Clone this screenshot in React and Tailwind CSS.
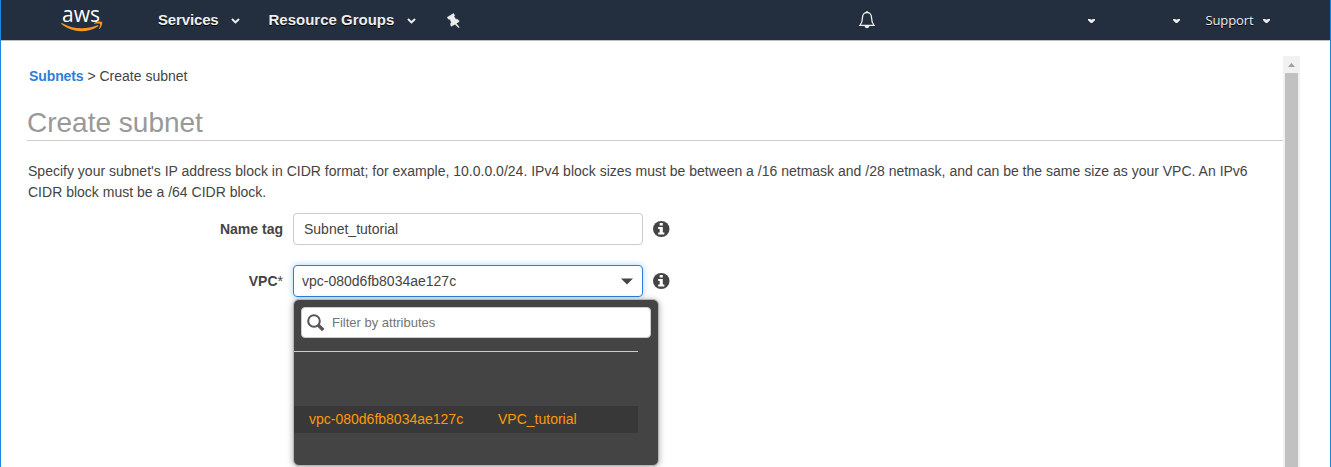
import React from "react";

function Chevron({ className = "" }) {
  return (
    <svg className={className} width="9" height="6" viewBox="0 0 9 6" fill="none" stroke="#eee" strokeWidth="2">
      <path d="M1 1l3.500 3.400L8 1" />
    </svg>
  );
}

function Caret({ className = "" }) {
  return (
    <svg className={className} width="7" height="4" viewBox="0 0 7 4" fill="#eee">
      <path d="M0 0H2L3.500.8 5 0H7V1.200L4.200 4H2.800L0 1.200z" />
    </svg>
  );
}

function AwsLogo() {
  return (
    <div className="relative h-[28px] w-[42px]">
      <span className="absolute left-[1px] top-[-4px] text-[21px] font-medium leading-[24px] text-white font-['Open_Sans',sans-serif]">aws</span>
      <svg className="absolute left-0 top-[15px]" width="42" height="12" viewBox="0 0 42 12">
        <path d="M.2 2.400C.4 1.900.8 1.900 1.300 2.200 13 8.800 25 8.600 36.500 4.300 37.500 4 38 4.700 37.200 5.300 26 12.800 10 11.500.5 3.100z" fill="#f7981f" />
        <path d="M33.300 2C35.500.3 40.200.2 41 1.100 41.700 2.200 40.500 6.500 38.500 8 38 8.300 37.900 8 38 7.600 38.700 6 39.500 3.800 39 3 38.400 2.200 35.500 2.500 33.800 2.700 33 2.800 32.900 2.400 33.300 2z" fill="#f7981f" />
      </svg>
    </div>
  );
}

function Info() {
  return (
    <svg className="mb-px ml-[10px]" width="16.500" height="16" viewBox="0 0 16 16" preserveAspectRatio="none">
      <circle cx="8" cy="8" r="8" fill="#444" />
      <path fill="#fff" d="M6.500 2h3v2.500h-3zM5 6h4.500v5.500H11v2H5v-2h1.500V8H5z" />
    </svg>
  );
}

function Header() {
  return (
    <header className="flex h-[41px] shrink-0 items-center border-b border-[#bfbfbf] bg-[#232f3e] text-[15px] font-bold text-[#eee]">
      <div className="ml-[60px] w-[97px]"><AwsLogo /></div>
      <span className="w-[73px] tracking-[-0.15px] [text-shadow:0_1px_0_#000]">Services</span>
      <Chevron className="mt-[2px]" />
      <span className="ml-[28.500px] w-[138px] [text-shadow:0_1px_0_#000]">Resource Groups</span>
      <Chevron className="mt-[2px]" />
      <svg className="ml-[31.500px]" width="13" height="15" viewBox="0 0 13 15" fill="#eee" stroke="#eee" strokeWidth="0.500">
        <path d="M.3 4.200L6.500.5 7.700 2.300 7 3.400 8.700 6.200C10.500 5.900 12 6.900 12.200 8.500L9.300 10.400 12.300 14.300 11.300 14.500 8 11.200 4.300 13.300C3.300 12 3.300 10.500 4.300 9.200L3 6.300 1.500 6.200z" />
      </svg>
      <svg className="ml-[399px]" width="16" height="18" viewBox="0 0 16 18">
        <path d="M8 1.500C5 1.500 3.500 4 3.500 6.500 3.500 10 2.700 12.200 1 14.300H15C13.300 12.200 12.500 10 12.500 6.500 12.500 4 11 1.500 8 1.500z" fill="none" stroke="#eee" strokeWidth="1.300" />
        <path d="M7 .3h2v1.500H7zM5.500 15h5Q9.800 17.300 8 17.300T5.500 15z" fill="#eee" />
      </svg>
      <Caret className="ml-[212.500px] mt-px" />
      <Caret className="ml-[78px] mt-px" />
      <span className="ml-[26px] mt-px w-[57px] text-[13px] font-medium tracking-[-0.12px] font-['Open_Sans',sans-serif] [text-shadow:0_1px_0_#000]">Support</span>
      <Caret className="mt-px" />
    </header>
  );
}

function Dropdown() {
  return (
    <div className="absolute left-0 top-[34px] h-[167px] w-[366px] rounded-[6px] border border-[#b5b5b5] bg-[#444] shadow-[0_1px_6px_rgba(0,0,0,0.35)]">
      <div className="ml-[7px] mt-[7px] flex h-[31px] w-[350px] items-center rounded-[4px] border border-[#ccc] bg-white text-[13px] text-[#757575]">
        <svg className="ml-[5px]" width="18" height="18" viewBox="0 0 18 18" fill="none" stroke="#555">
          <circle cx="7" cy="7" r="5.800" strokeWidth="2" />
          <path d="M11 11l5.300 5" strokeWidth="3.300" />
        </svg>
        <span className="ml-[7px]">Filter by attributes</span>
      </div>
      <div className="mt-[13px] w-[344px] border-t border-[#ccc]" />
      <div className="mt-[54px] flex h-[27px] w-[344px] items-center bg-[#383838] pl-[15px] text-[#ff9900]">
        <span className="w-[189px]">vpc-080d6fb8034ae127c</span>
        <span>VPC_tutorial</span>
      </div>
    </div>
  );
}

export default function App() {
  return (
    <div className="flex h-[467px] w-[1331px] flex-col overflow-hidden border-x border-[#1b87e0] bg-white font-['Liberation_Sans',Arial,sans-serif] text-[14px] text-[#444]">
      <Header />
      <div className="flex min-h-0 flex-1 pt-[15px]">
        <main className="w-[1282px] shrink-0 pl-[26px]">
          <nav className="ml-[2px] mt-[10px] leading-[21px]">
            <a className="font-bold text-[#2e7fd9] tracking-[-0.1px]">Subnets</a> &gt; Create subnet
          </nav>
          <h1 className="mt-[19px] h-[35px] border-b border-[#ccc] text-[28px] leading-[33px] text-[#999]">Create subnet</h1>
          <p className="ml-[1px] mt-[20px] w-[1235px] leading-[21px] tracking-[0.005px]">
            Specify your subnet's IP address block in CIDR format; for example, 10.0.0.0/24. IPv4 block sizes must be between a /16 netmask and /28 netmask, and can be the same size as your VPC. An IPv6 CIDR block must be a /64 CIDR block.
          </p>
          <div className="mt-[10px] flex h-[32px] items-center">
            <label className="mr-[10px] w-[256px] text-right font-bold">Name tag</label>
            <div className="flex h-full w-[350px] items-center rounded-[4px] border border-[#ccc] pl-[10px]">Subnet_tutorial</div>
            <Info />
          </div>
          <div className="mt-[20px] flex h-[32px] items-center">
            <label className="mr-[10px] w-[256px] text-right font-bold">VPC<span className="font-normal">*</span></label>
            <div className="relative h-full w-[350px]">
              <div className="flex h-full items-center justify-between rounded-[4px] border border-[#2e7fd9] pl-[8px] pr-[9px] shadow-[0_0_6px_rgba(46,139,230,0.4)]">
                <span>vpc-080d6fb8034ae127c</span>
                <svg className="mt-px" width="12" height="7" viewBox="0 0 12 7"><path d="M0 .5h12L6 6.500z" fill="#444" /></svg>
              </div>
              <Dropdown />
            </div>
            <Info />
          </div>
        </main>
        <div className="flex w-[17px] flex-col items-center bg-[#f1f1f1]">
          <svg className="mt-[7px]" width="7" height="4" viewBox="0 0 7 4"><path d="M3.500 0L7 4H0z" fill="#a0a0a0" /></svg>
          <div className="mt-[6px] w-[13px] flex-1 bg-[#c1c1c1]" />
        </div>
      </div>
    </div>
  );
}
